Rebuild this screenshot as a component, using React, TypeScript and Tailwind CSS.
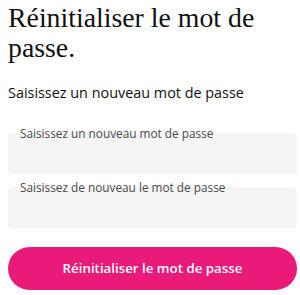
import React from "react";

const sans = { fontFamily: '"Open Sans", "Liberation Sans", sans-serif' };

function Field({ label }: { label: string }) {
  return (
    <div className="relative h-[41px] rounded-[4px] bg-[#f5f5f5]">
      <span className="absolute left-[12px] -top-[7px] text-[11.8px] leading-[14px] text-[#4a4a4a]">
        {label}
      </span>
    </div>
  );
}

export default function App() {
  return (
    <div className="h-[295px] w-[300px] overflow-hidden bg-white px-[8px] pt-[3px] pr-[3px]" style={sans}>
      <h1
        className="w-[250px] text-[27.8px] leading-[30px] text-[#111]"
        style={{ fontFamily: '"Liberation Serif", serif' }}
      >
        Réinitialiser le mot de passe.
      </h1>
      <p className="mt-[21px] text-[14.4px] leading-[18px] font-medium text-[#111]">
        Saisissez un nouveau mot de passe
      </p>
      <div className="mt-[31px] flex flex-col gap-[13px]">
        <Field label="Saisissez un nouveau mot de passe" />
        <Field label="Saisissez de nouveau le mot de passe" />
      </div>
      <button
        type="button"
        className="mt-[19px] flex h-[43px] w-full items-center justify-center rounded-full bg-[#ea1a7a] text-[13.3px] font-semibold text-white"
      >
        Réinitialiser le mot de passe
      </button>
    </div>
  );
}
